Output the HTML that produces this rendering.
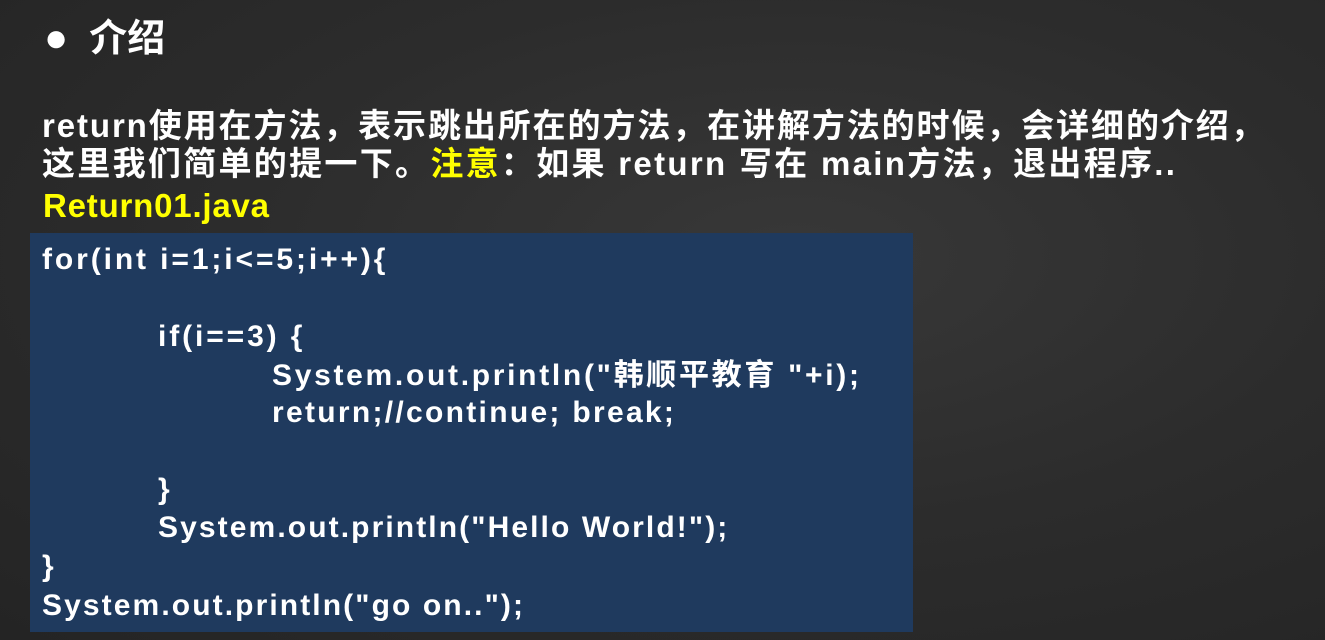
<!DOCTYPE html>
<html><head><meta charset="utf-8"><style>
html,body{margin:0;padding:0}
body{width:1325px;height:640px;overflow:hidden;position:relative;
background:radial-gradient(ellipse at 60% 40%,#383838 0%,#2c2c2c 50%,#242424 100%);
font-family:"Liberation Sans","Noto Sans CJK SC",sans-serif;font-weight:bold;color:#fff}
.t{position:absolute;white-space:nowrap;line-height:1}
.y{color:#ffff00}
#box{position:absolute;left:30px;top:233px;width:883px;height:399px;background:#1f3a5e}
.c{position:absolute;white-space:nowrap;font-size:30px;line-height:1;color:#fff;letter-spacing:2.1px}
</style></head><body>
<div class="t" style="left:44px;top:18px;font-size:38px"><span style="font-size:40px">●</span>&nbsp;&nbsp;介绍</div>
<div class="t" style="left:42px;top:109px;font-size:33px;letter-spacing:1.9px">return使用在方法，表示跳出所在的方法，在讲解方法的时候，会详细的介绍，</div>
<div class="t" style="left:42px;top:147px;font-size:33px;letter-spacing:2.3px">这里我们简单的提一下。<span class="y">注意</span>：如果 return 写在 main方法，退出程序..</div>
<div class="t y" style="left:43px;top:189px;font-size:33px;letter-spacing:0.8px">Return01.java</div>
<div id="box"></div>
<div class="c" style="left:42px;top:245px;letter-spacing:2.9px">for(int i=1;i&lt;=5;i++){</div>
<div class="c" style="left:158px;top:322px;letter-spacing:2.9px">if(i==3) {</div>
<div class="c" style="left:272px;top:361px;letter-spacing:2.7px">System.out.println("韩顺平教育 "+i);</div>
<div class="c" style="left:272px;top:398px;letter-spacing:2.3px">return;//continue; break;</div>
<div class="c" style="left:158px;top:475px">}</div>
<div class="c" style="left:158px;top:513px">System.out.println("Hello World!");</div>
<div class="c" style="left:42px;top:552px">}</div>
<div class="c" style="left:42px;top:591px">System.out.println("go on..");</div>
</body></html>
